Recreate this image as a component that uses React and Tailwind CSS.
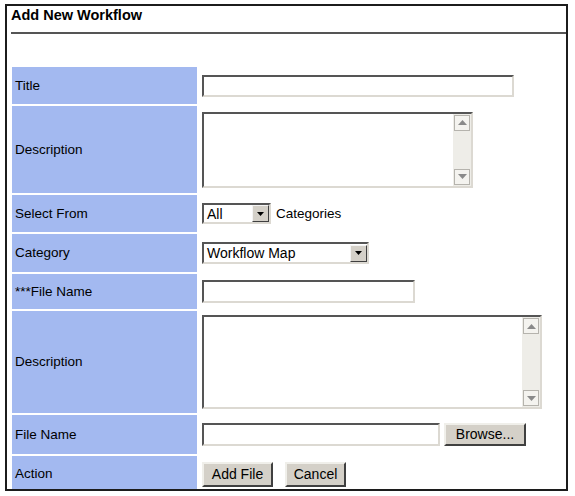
import React from "react";

const font = { fontFamily: '"Liberation Sans", Arial, sans-serif' };

function Inset({ className = "", children }) {
  return (
    <div
      className={`border-2 border-t-[#555] border-l-[#555] border-r-[#dcd9d2] border-b-[#dcd9d2] bg-white ${className}`}
    >
      {children}
    </div>
  );
}

function ScrollBtn({ up }) {
  return (
    <div className="w-[16px] h-[16px] border border-[#b5b3ad] bg-[#f4f3ef] flex items-center justify-center">
      <svg width="9" height="5" viewBox="0 0 9 5">
        {up ? (
          <polygon points="0,5 9,5 4.5,0" fill="#8a8a8a" />
        ) : (
          <polygon points="0,0 9,0 4.5,5" fill="#8a8a8a" />
        )}
      </svg>
    </div>
  );
}

function TextArea({ className }) {
  return (
    <Inset className={`flex justify-end ${className}`}>
      <div className="w-[18px] h-full bg-[#eeede8] flex flex-col justify-between items-center py-[1px]">
        <ScrollBtn up />
        <ScrollBtn />
      </div>
    </Inset>
  );
}

function DropBtn() {
  return (
    <div className="w-[17px] h-[17px] bg-[#d4d0c8] border border-t-[#f4f4f4] border-l-[#f4f4f4] border-r-[#404040] border-b-[#404040] flex items-center justify-center">
      <svg width="7" height="4" viewBox="0 0 7 4">
        <polygon points="0,0 7,0 3.5,4" fill="#000" />
      </svg>
    </div>
  );
}

function Select({ value, className }) {
  return (
    <Inset className={`flex items-center justify-between ${className}`}>
      <span className="pl-[3px] text-[14px] leading-none text-black">{value}</span>
      <DropBtn />
    </Inset>
  );
}

function Button({ children, className }) {
  return (
    <div
      className={`bg-[#d4d0c8] border-2 border-t-[#f0efea] border-l-[#f0efea] border-r-[#404040] border-b-[#404040] flex items-center justify-center text-[14px] text-black ${className}`}
    >
      {children}
    </div>
  );
}

function Row({ label, h, children, align = "items-center", extra = "", labelExtra = "" }) {
  return (
    <div className={`flex ${h}`}>
      <div className={`w-[185px] shrink-0 bg-[#a3b9f0] flex items-center pl-[3px] pt-[1px] text-[13.5px] text-black ${labelExtra}`}>
        {label}
      </div>
      <div className={`flex ${align} pl-[5px] ${extra}`}>{children}</div>
    </div>
  );
}

export default function App() {
  return (
    <div className="w-[575px] h-[496px] bg-white pt-[4px] pl-[5px]" style={font}>
      <div className="w-[563px] h-[487px] border-2 border-[#1c1c1c] flex flex-col">
        <div className="mt-[1px] pl-[4px] h-[17px] leading-[17px] text-[14.5px] font-bold text-black">
          Add New Workflow
        </div>
        <div className="mt-[8px] ml-[4px] h-[2px] bg-[#555]" />
        <div className="mt-[33px] ml-[5px] flex flex-col gap-[2px] flex-1">
          <Row label="Title" h="h-[37px]">
            <Inset className="w-[312px] h-[22px]" />
          </Row>
          <Row label="Description" h="h-[87px]">
            <TextArea className="w-[271px] h-[76px]" />
          </Row>
          <Row label="Select From" h="h-[37px]">
            <Select value="All" className="w-[69px] h-[21px]" />
            <span className="ml-[5px] pt-[2px] text-[13.5px] text-black">Categories</span>
          </Row>
          <Row label="Category" h="h-[38px]">
            <Select value="Workflow Map" className="w-[167px] h-[22px]" />
          </Row>
          <Row label="***File Name" h="h-[35px]">
            <Inset className="w-[213px] h-[23px]" />
          </Row>
          <Row label="Description" h="h-[102px]">
            <TextArea className="w-[340px] h-[94px]" />
          </Row>
          <Row label="File Name" h="h-[39px]">
            <Inset className="w-[238px] h-[23px]" />
            <Button className="ml-[4px] w-[82px] h-[23px]">Browse...</Button>
          </Row>
          <Row label="Action" h="flex-1" align="items-start" extra="pt-[6px]" labelExtra="pt-[4px]">
            <Button className="w-[71px] h-[25px]">Add File</Button>
            <Button className="ml-[12px] w-[61px] h-[25px]">Cancel</Button>
          </Row>
        </div>
      </div>
    </div>
  );
}
